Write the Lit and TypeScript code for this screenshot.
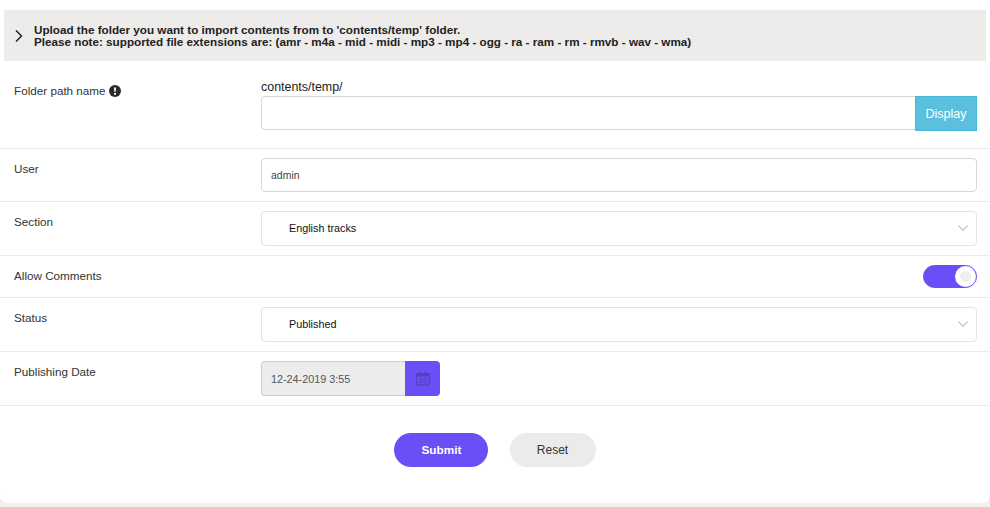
import { LitElement, html, css } from "lit";
import { customElement } from "lit/decorators.js";

@customElement("app-root")
export class AppRoot extends LitElement {
  static styles = css`
    :host {
      display: block;
      height: 507px;
      overflow: hidden;
      background: #f0f0f0;
      font-family: "Liberation Sans", Arial, sans-serif;
      color: #333;
    }
    .card {
      background: #fff;
      height: 503px;
      box-sizing: border-box;
      padding-top: 10px;
      border-radius: 0 0 8px 8px;
    }
    .banner {
      margin: 0 4px;
      height: 51px;
      background: #edecea;
      display: flex;
      align-items: center;
      font-size: 11.7px;
      font-weight: 700;
      line-height: 12px;
      color: #222;
    }
    .chev {
      width: 30px;
      display: flex;
      justify-content: center;
      flex: none;
    }
    .row {
      display: flex;
      box-sizing: border-box;
      border-bottom: 1px solid #ececec;
      padding: 9px 13px 9px 14px;
    }
    .label {
      width: 247px;
      flex: none;
      font-size: 11.7px;
      line-height: 14px;
      padding-top: 4px;
      display: flex;
      align-items: flex-start;
      gap: 3px;
    }
    .info {
      margin-top: 1px;
    }
    .field {
      flex: 1;
      min-width: 0;
    }
    .r1 {
      height: 88px;
      padding-top: 18px;
    }
    .r1 .label {
      padding-top: 5px;
    }
    .path {
      font-size: 12.45px;
      line-height: 14px;
      margin-bottom: 2px;
      padding-top: 1px;
      color: #222;
    }
    .group {
      display: flex;
    }
    .box {
      box-sizing: border-box;
      border: 1px solid #d8d8d8;
      border-radius: 4px;
      background: #fff;
      font-size: 10.5px;
      display: flex;
      align-items: center;
      color: #444;
    }
    .grow {
      flex: 1;
    }
    .h34 {
      height: 34px;
      padding-left: 9px;
    }
    .group .box {
      border-radius: 4px 0 0 4px;
      border-right: 0;
    }
    .display {
      width: 62px;
      height: 35px;
      box-sizing: border-box;
      background: #5bc0de;
      border: 1px solid #46b8da;
      color: #fff;
      font-size: 12.5px;
      display: flex;
      align-items: center;
      justify-content: center;
    }
    .select {
      height: 35px;
      padding: 0 8px 2px 27px;
      justify-content: space-between;
      border-color: #e4e4e4;
      color: #111;
      font-size: 10.8px;
    }
    .r4 {
      height: 42px;
    }
    .toggle {
      margin-left: auto;
      width: 54px;
      height: 23px;
      box-sizing: border-box;
      border-radius: 12px;
      background: #6a4ff7;
      display: flex;
      justify-content: flex-end;
      align-items: center;
      border: 1px solid #6a4ff7;
    }
    .knob {
      width: 21px;
      height: 21px;
      border-radius: 50%;
      background: #fff;
      display: flex;
      align-items: center;
      justify-content: center;
    }
    .knob span {
      width: 11px;
      height: 11px;
      border-radius: 50%;
      background: #eee;
    }
    .date {
      display: flex;
      width: 179px;
      height: 35px;
    }
    .date .val {
      flex: 1;
      box-sizing: border-box;
      background: #ececec;
      border: 1px solid #ccc;
      border-right: 0;
      border-radius: 4px 0 0 4px;
      font-size: 10.8px;
      color: #555;
      padding-left: 9px;
      display: flex;
      align-items: center;
    }
    .date .addon {
      width: 35px;
      background: #6a4ff7;
      border-radius: 0 4px 4px 0;
      display: flex;
      align-items: center;
      justify-content: center;
    }
    .actions {
      display: flex;
      justify-content: center;
      gap: 22px;
      padding-top: 27px;
      padding-right: 1px;
    }
    .btn {
      height: 34px;
      border-radius: 17px;
      display: flex;
      align-items: center;
      justify-content: center;
      font-size: 12px;
    }
    .submit {
      width: 94px;
      background: #6a4ff7;
      color: #fff;
      font-weight: 700;
      font-size: 11.8px;
      padding-left: 2px;
      box-sizing: border-box;
    }
    .reset {
      width: 86px;
      background: #ebebeb;
      color: #333;
    }
  `;

  private caret() {
    return html`<svg width="10" height="6" viewBox="0 0 10 6"><path d="M.5.700 5 5.200 9.500.700" fill="none" stroke="#b9c0c8" stroke-width="1.200"/></svg>`;
  }

  render() {
    return html`
      <div class="card">
        <div class="banner">
          <div class="chev">
            <svg width="10" height="14" viewBox="0 0 10 14"><path d="M2 1.500 7.500 7 2 12.500" fill="none" stroke="#222" stroke-width="1.500"/></svg>
          </div>
          <div>
            Upload the folder you want to import contents from to 'contents/temp' folder.<br />
            Please note: supported file extensions are: (amr - m4a - mid - midi - mp3 - mp4 - ogg - ra - ram - rm - rmvb - wav - wma)
          </div>
        </div>

        <div class="row r1">
          <div class="label">
            Folder path name
            <svg class="info" width="12" height="12" viewBox="0 0 12 12">
              <circle cx="6" cy="6" r="6" fill="#2b2b2b"/>
              <path d="M5 2.500h2l-.3 4.200H5.300zM5 8h2v1.700H5z" fill="#fff"/>
            </svg>
          </div>
          <div class="field">
            <div class="path">contents/temp/</div>
            <div class="group">
              <div class="box grow h34"></div>
              <div class="display">Display</div>
            </div>
          </div>
        </div>

        <div class="row">
          <div class="label">User</div>
          <div class="field"><div class="box h34">admin</div></div>
        </div>

        <div class="row">
          <div class="label">Section</div>
          <div class="field"><div class="box select">English tracks ${this.caret()}</div></div>
        </div>

        <div class="row r4">
          <div class="label">Allow Comments</div>
          <div class="toggle"><div class="knob"><span></span></div></div>
        </div>

        <div class="row">
          <div class="label">Status</div>
          <div class="field"><div class="box select">Published ${this.caret()}</div></div>
        </div>

        <div class="row">
          <div class="label">Publishing Date</div>
          <div class="field">
            <div class="date">
              <div class="val">12-24-2019 3:55</div>
              <div class="addon">
                <svg width="14" height="15" viewBox="0 0 14 15">
                  <path d="M1.500 2.500h11a.8.8 0 0 1 .8.8v10a.8.8 0 0 1-.8.8h-11a.8.8 0 0 1-.8-.8v-10a.8.8 0 0 1 .8-.8z" fill="none" stroke="#5440b8" stroke-width="1.200"/>
                  <path d="M1 2.500h12V5.500H1zM3.500.8h1.500v2H3.500zM9 .8h1.500v2H9z" fill="#5440b8"/>
                  <path d="M4 7.500h2v4.500H4zM8 7.500h2v4.500H8z" fill="none" stroke="#5440b8" stroke-width=".8"/>
                </svg>
              </div>
            </div>
          </div>
        </div>

        <div class="actions">
          <div class="btn submit">Submit</div>
          <div class="btn reset">Reset</div>
        </div>
      </div>
    `;
  }
}
